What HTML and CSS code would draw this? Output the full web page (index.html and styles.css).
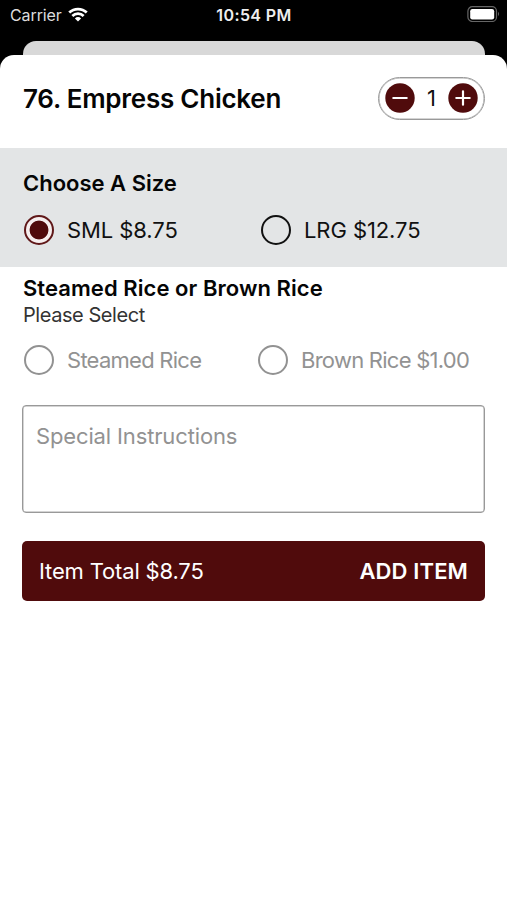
FILE: index.html
```html
<!DOCTYPE html>
<html lang="en">
<head>
<meta charset="utf-8">
<title>Empress Chicken</title>
<link rel="stylesheet" href="styles.css">
</head>
<body>
<header class="status">
  <div class="carrier"><span class="t carrier-name">Carrier</span>
    <svg class="wifi" viewBox="0 0 20 15"><path d="M0.3 4.6A14 14 0 0 1 19.7 4.6L17.8 6.6A11.2 11.2 0 0 0 2.2 6.6ZM3.4 7.9A9.4 9.4 0 0 1 16.6 7.9L14.7 9.9A6.8 6.8 0 0 0 5.3 9.9ZM6.9 11.4A4.4 4.4 0 0 1 13.1 11.4L10 14.6Z"/></svg>
  </div>
  <span class="t clock">10:54 PM</span>
  <svg class="battery" viewBox="0 0 33 16"><rect class="shell" x="0.9" y="0.7" width="28.6" height="14.8" rx="4.5"/><rect class="charge" x="3.2" y="3" width="24" height="10.4" rx="2.2"/><path class="cap" d="M31 5.8Q33 8 31 10.2Z"/></svg>
</header>
<div class="behind"></div>
<main class="sheet">
  <div class="title-row">
    <h1><span class="t title">76. Empress Chicken</span></h1>
    <div class="stepper">
      <svg class="step" viewBox="0 0 30 30"><circle cx="15" cy="15" r="14.7"/><path d="M8.3 15H21.7"/></svg>
      <span class="t qty">1</span>
      <svg class="step" viewBox="0 0 30 30"><circle cx="15" cy="15" r="14.7"/><path d="M8.3 15H21.7M15 8.3V21.7"/></svg>
    </div>
  </div>
  <section class="size">
    <h2><span class="t size-title">Choose A Size</span></h2>
    <div class="options">
      <label class="option first"><i class="radio on"></i><span class="t sml">SML $8.75</span></label>
      <label class="option"><i class="radio"></i><span class="t lrg">LRG $12.75</span></label>
    </div>
  </section>
  <section class="rice">
    <h2><span class="t rice-title">Steamed Rice or Brown Rice</span></h2>
    <p><span class="t please">Please Select</span></p>
    <div class="options">
      <label class="option first"><i class="radio"></i><span class="t steamed">Steamed Rice</span></label>
      <label class="option"><i class="radio"></i><span class="t brown">Brown Rice $1.00</span></label>
    </div>
  </section>
  <div class="notes"><span class="t special">Special Instructions</span></div>
  <div class="add"><span class="t total">Item Total $8.75</span><strong class="t add-label">ADD ITEM</strong></div>
</main>
</body>
</html>
```
FILE: styles.css
```css
* { box-sizing: border-box; }
body { margin: 0; height: 900px; overflow: hidden; background: #000; color: #111; font-family: Inter, "Liberation Sans", sans-serif; font-size: 22px; }
h1, h2, p { margin: 0; font-weight: 600; line-height: 28px; }
h1, h2 { color: #050505; }
h2 { font-size: 22px; }
.t { white-space: nowrap; }
.status { height: 41px; padding: 0 7px 11px 10px; display: grid; grid-template-columns: 1fr auto 1fr; align-items: center; color: #fff; font-size: 16px; }
.carrier { display: flex; align-items: center; gap: 6px; color: #ddd; }
.carrier-name { letter-spacing: -.1px; }
.wifi { width: 20px; height: 15px; margin-top: -1px; fill: #fff; }
.clock { padding-right: 2px; font-weight: 600; font-size: 16px; letter-spacing: .4px; color: #eee; }
.battery { width: 33px; height: 16px; justify-self: end; margin-top: -2px; }
.shell { fill: none; stroke: #666; stroke-width: 1.2; }
.charge { fill: #fff; }
.cap { fill: #666; }
.behind { height: 14px; margin: 0 22px 0 23px; background: #d8d8d8; border-radius: 13px 13px 0 0; }
.sheet { height: 845px; background: #fff; border-radius: 14px 14px 0 0; }
.title-row { height: 93px; padding: 21px 22px 0 23px; display: flex; justify-content: space-between; align-items: flex-start; }
.title-row h1 { font-size: 26px; line-height: 46px; letter-spacing: -.25px; }
.stepper { width: 107px; height: 43px; margin-top: 1px; padding: 0 6px 1px; display: flex; justify-content: space-between; align-items: center; border: 1px solid #999; box-shadow: inset 0 0 0 .5px #aaa; border-radius: 22px; }
.step { width: 30px; height: 30px; fill: #500b0c; }
.step path { stroke: #fff; stroke-width: 2.2; stroke-linecap: round; }
.size { height: 119px; padding: 21px 23px 0; background: #e3e5e6; }
.options { display: flex; align-items: center; height: 30px; }
.size .options { margin-top: 18px; }
.option { display: flex; align-items: center; gap: 13px; }
.sml, .lrg { letter-spacing: -.08px; }
.first { width: 237px; }
.rice .first { width: 234px; }
.radio { width: 30px; height: 30px; margin-left: 1px; border: 2px solid #111; border-radius: 50%; }
.on { border-color: #601819; background: radial-gradient(circle, #500b0c 9px, #f6eeee 9.8px); }
.rice { padding: 7px 23px 0; }
.rice h2 { line-height: 28px; letter-spacing: .06px; }
.rice p { font-weight: 400; font-size: 20px; line-height: 26px; letter-spacing: -.44px; color: #333; }
.rice .options { margin-top: 17px; color: #929292; }
.rice .radio { border-color: #929292; }
.steamed, .brown { letter-spacing: -.74px; }
.notes { height: 108px; margin: 30px 22px 0; padding: 15px 13px; border: 1px solid #999; box-shadow: inset 0 0 0 .5px #aaa; border-radius: 4px; color: #929292; line-height: 30px; letter-spacing: -.14px; }
.add { height: 60px; margin: 28px 22px 0; padding: 0 17px; display: flex; justify-content: space-between; align-items: center; background: #500b0c; color: #fff; border-radius: 5px; }
.total { letter-spacing: -.16px; }
.add-label { font-weight: 600; letter-spacing: .12px; }
```
